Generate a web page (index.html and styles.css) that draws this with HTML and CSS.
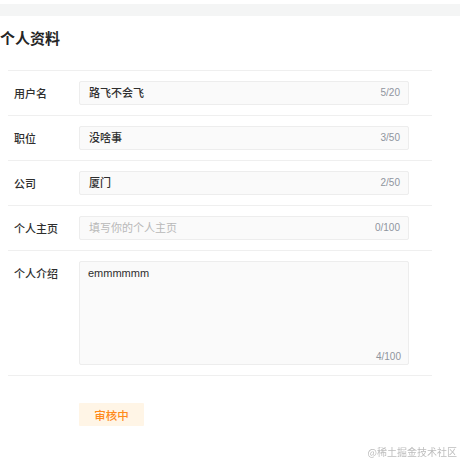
FILE: index.html
```html
<!DOCTYPE html>
<html lang="zh-CN">
<head>
<meta charset="utf-8">
<title>个人资料</title>
<link rel="stylesheet" href="styles.css">
</head>
<body>
<div class="top-band"></div>
<main class="page">
  <h1 class="title">个人资料</h1>
  <form class="form">
    <div class="row">
      <label class="label">用户名</label>
      <div class="input"><span class="value">路飞不会飞</span><span class="count">5/20</span></div>
    </div>
    <div class="row">
      <label class="label">职位</label>
      <div class="input"><span class="value">没啥事</span><span class="count">3/50</span></div>
    </div>
    <div class="row">
      <label class="label">公司</label>
      <div class="input"><span class="value">厦门</span><span class="count">2/50</span></div>
    </div>
    <div class="row">
      <label class="label">个人主页</label>
      <div class="input"><span class="value placeholder">填写你的个人主页</span><span class="count">0/100</span></div>
    </div>
    <div class="row row-last">
      <label class="label">个人介绍</label>
      <div class="textarea"><span class="value">emmmmmm</span><span class="count">4/100</span></div>
    </div>
    <div class="actions">
      <span class="status">审核中</span>
    </div>
  </form>
</main>
<div class="watermark">@稀土掘金技术社区</div>
</body>
</html>
```
FILE: styles.css
```css
html, body {
  margin: 0;
  padding: 0;
  background: #ffffff;
}
body {
  font-family: "Liberation Sans", "Noto Sans CJK SC", sans-serif;
  color: #333333;
  width: 460px;
  height: 460px;
  overflow: hidden;
}
.top-band {
  margin-top: 4px;
  height: 12px;
  background: #f4f5f5;
}
.page {
  padding: 0;
}
.title {
  margin: 11px 0 21px 0;
  font-size: 15px;
  line-height: 22px;
  font-weight: 700;
  color: #252525;
  font-family: "Noto Sans CJK SC", sans-serif;
}
.form {
  margin: 0 0 0 8px;
  width: 424px;
}
.row {
  display: flex;
  border-top: 1px solid #efefef;
  padding: 10px 0 10px 6px;
}
.row-last {
  border-bottom: 1px solid #efefef;
}
.label {
  width: 65px;
  flex: none;
  font-size: 11px;
  line-height: 24px;
  font-weight: 500;
  color: #2e2e2e;
  font-family: "Noto Sans CJK SC", sans-serif;
}
.input {
  width: 330px;
  height: 24px;
  box-sizing: border-box;
  background: #fafafa;
  border: 1px solid #ededed;
  border-radius: 2px;
  padding: 0 8px 0 9px;
  display: flex;
  align-items: center;
  justify-content: space-between;
}
.value {
  font-size: 11px;
  line-height: 22px;
  font-weight: 500;
  color: #2e2e2e;
}
.placeholder {
  color: #b8b8b8;
  font-weight: 400;
}
.count {
  font-size: 10px;
  line-height: 12px;
  color: #8f959e;
}
.textarea {
  width: 330px;
  height: 104px;
  box-sizing: border-box;
  background: #fafafa;
  border: 1px solid #ededed;
  border-radius: 2px;
  padding: 3px 7px 1px 8px;
  display: flex;
  flex-direction: column;
}
.textarea .value {
  line-height: 16px;
}
.textarea .count {
  margin-top: auto;
  align-self: flex-end;
}
.actions {
  padding: 27px 0 0 71px;
}
.status {
  display: inline-flex;
  align-items: center;
  justify-content: center;
  width: 65px;
  height: 23px;
  background: #fff5e6;
  color: #ff8a1a;
  font-size: 11.5px;
  font-weight: 500;
  border-radius: 1px;
  font-family: "Noto Sans CJK SC", sans-serif;
}
.watermark {
  position: fixed;
  right: 3px;
  bottom: 1px;
  font-size: 10px;
  line-height: 14px;
  color: #bdbdbd;
  font-family: "Noto Sans CJK SC", sans-serif;
}
```
